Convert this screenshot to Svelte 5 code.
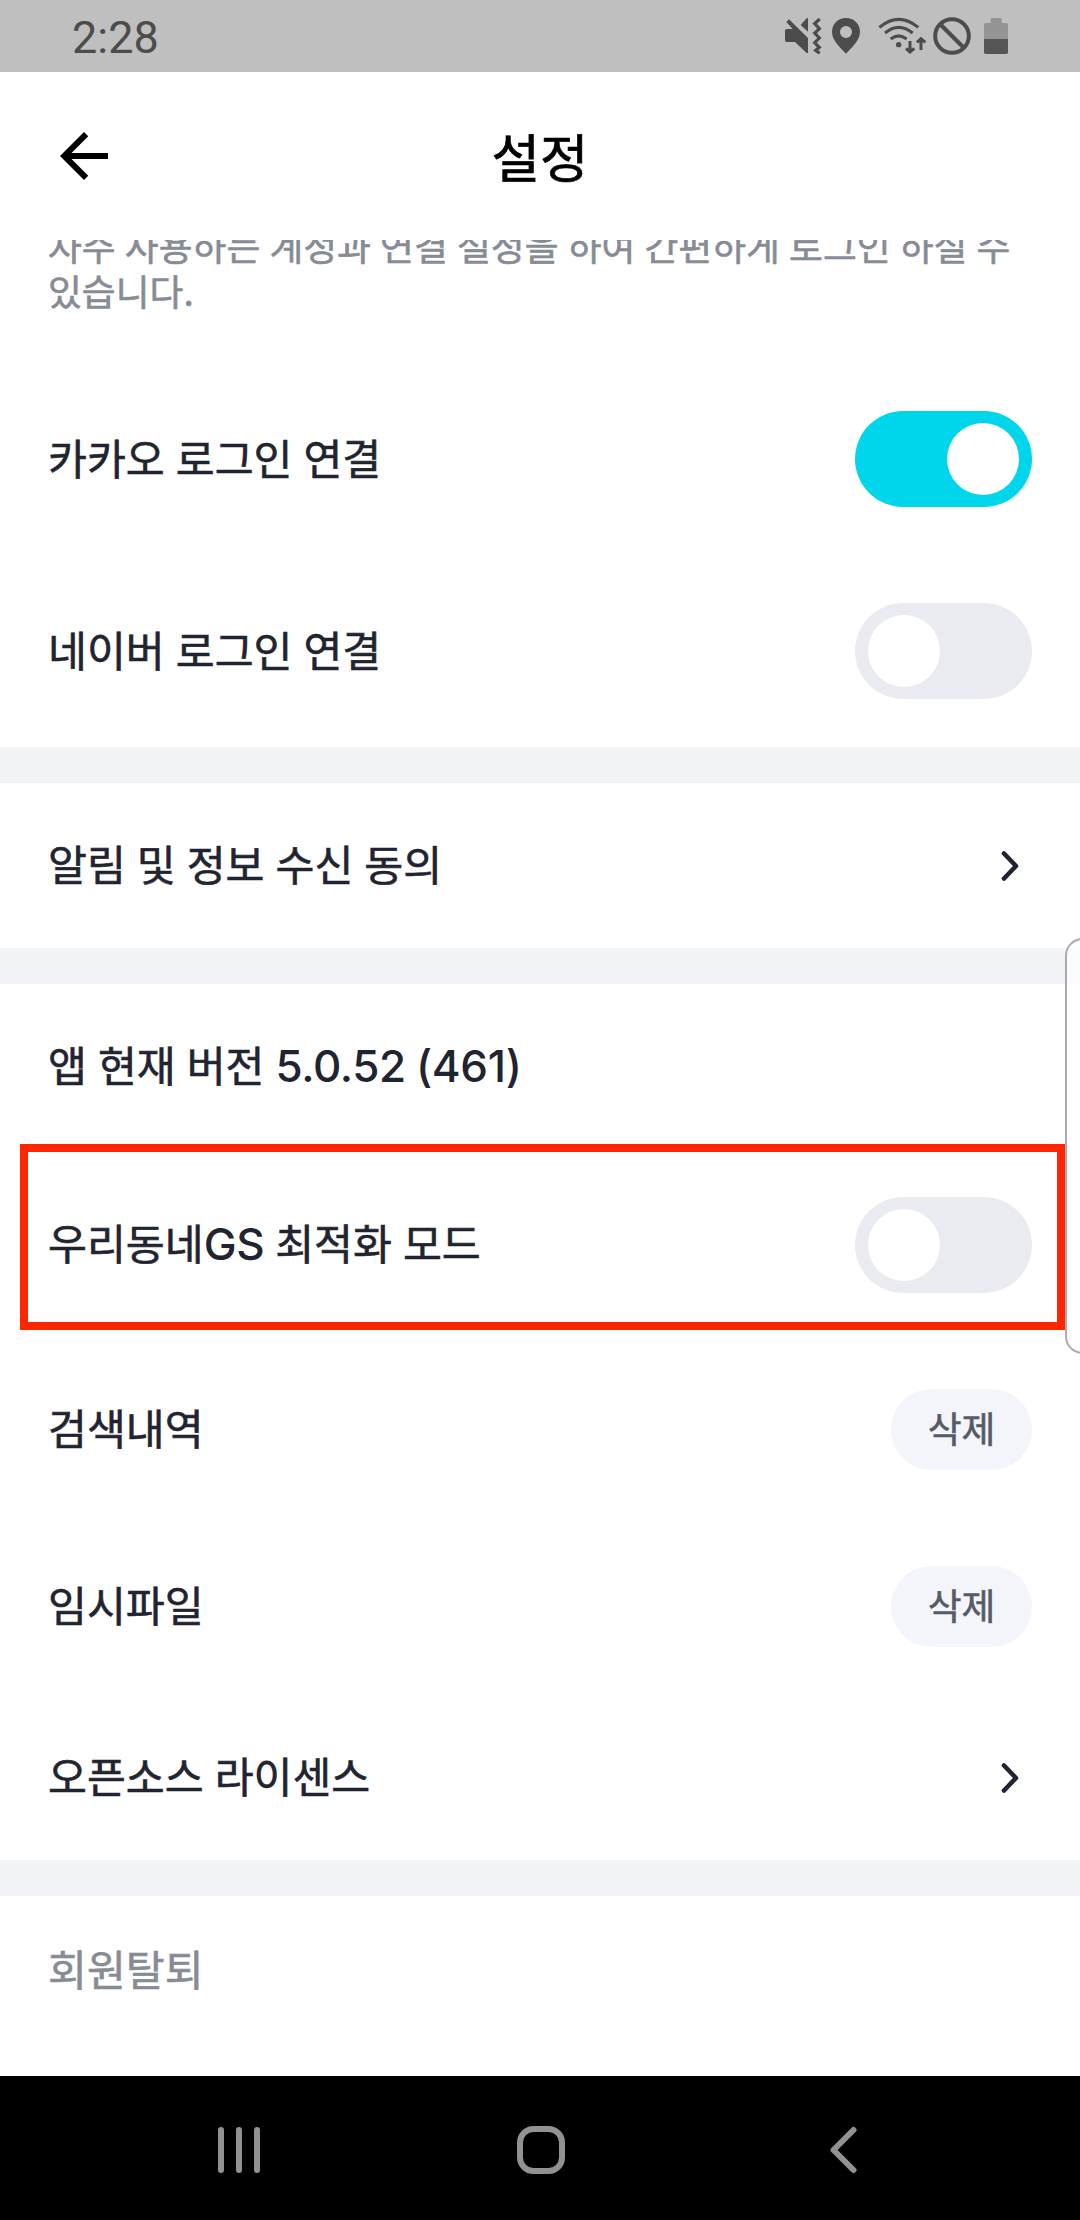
<script lang="ts">
	interface Row {
		label: string;
		latin?: string;
		tail?: string;
		kind: 'switch' | 'link' | 'button' | 'text';
		on?: boolean;
		highlight?: boolean;
	}

	const accountRows: Row[] = $state([
		{ label: '카카오 로그인 연결', kind: 'switch', on: true },
		{ label: '네이버 로그인 연결', kind: 'switch', on: false }
	]);

	const noticeRows: Row[] = [{ label: '알림 및 정보 수신 동의', kind: 'link' }];

	const appRows: Row[] = $state([
		{ label: '앱 현재 버전 ', latin: '5.0.52 (461)', kind: 'text' },
		{
			label: '우리동네',
			latin: 'GS',
			tail: ' 최적화 모드',
			kind: 'switch',
			on: false,
			highlight: true
		},
		{ label: '검색내역', kind: 'button' },
		{ label: '임시파일', kind: 'button' },
		{ label: '오픈소스 라이센스', kind: 'link' }
	]);
</script>

{#snippet settingRow(row: Row)}
	<div class="row {row.kind}" class:highlight={row.highlight}>
		<span class="label"
			>{row.label}{#if row.latin}<span class="latin">{row.latin}</span>{/if}{row.tail ?? ''}</span
		>
		{#if row.kind === 'switch'}
			<button
				class="toggle"
				class:on={row.on}
				role="switch"
				aria-checked={row.on}
				aria-label={row.label}
				onclick={() => (row.on = !row.on)}
			>
				<span class="knob"></span>
			</button>
		{:else if row.kind === 'button'}
			<button class="pill">삭제</button>
		{:else if row.kind === 'link'}
			<svg class="chevron" width="24" height="36" viewBox="0 0 24 36" aria-hidden="true">
				<path d="M5 5.5 17 18 5 30.5" />
			</svg>
		{/if}
	</div>
{/snippet}

<div class="screen">
	<div class="status">
		<span class="time">2:28</span>
		<div class="status-icons">
			<!-- 무음 / 진동 -->
			<svg class="mute" width="38" height="40" viewBox="72 48 114 120">
				<path
					d="M75 92q0-5 5-5h18L79 66l8-8 57 56v45h-4l-35-33H80q-5 0-5-5zM122 75l18-20h4v40z"
					fill="currentColor"
				/>
				<path
					d="M179 57 164 71 178 86 164 99 178 114 164 128 178 142 167 151 179 160"
					fill="none"
					stroke="currentColor"
					stroke-width="9.5"
				/>
			</svg>
			<svg class="pin" width="30" height="40" viewBox="213 48 90 120">
				<path
					d="M258 54c-24 0-42 18-42 41 0 26 24 46 42 66 18-20 42-40 42-66 0-23-18-41-42-41zm0 60a18 18 0 1 1 0-36 18 18 0 0 1 0 36z"
					fill="currentColor"
				/>
			</svg>
			<svg class="wifi" width="49" height="40" viewBox="353 48 147 120">
				<g fill="none" stroke="currentColor" stroke-width="9">
					<path d="M357 82q58-48 117 0" />
					<path d="M374 99q41-34 83 0" />
					<path d="M391 117q24-19 48 0" />
					<path d="M449 123v31M437 145l12 11 13-11M482 150v-32M470 127l12-11 13 11" />
				</g>
				<circle cx="415" cy="134" r="8" fill="currentColor" />
			</svg>
			<svg class="blocked" width="40" height="40" viewBox="516 48 120 120">
				<g fill="none" stroke="currentColor" stroke-width="12">
					<circle cx="576" cy="108" r="50.5" />
					<path d="m540 72 72 72" />
				</g>
			</svg>
			<svg class="battery" width="24" height="40" viewBox="672 48 72 120">
				<path d="M692 69V57q0-3 3-3h27q3 0 3 3v12h14q5 0 5 5v43h-72V74q0-5 5-5z" fill="#949494" />
				<path d="M672 117h72v40q0 5-5 5h-62q-5 0-5-5z" fill="#555" />
			</svg>
		</div>
	</div>

	<header>
		<button class="back" aria-label="뒤로">
			<svg width="72" height="72" viewBox="0 0 24 24">
				<path d="M20 11H7.83l5.59-5.59L12 4l-8 8 8 8 1.41-1.41L7.83 13H20v-2z" />
			</svg>
		</button>
		<h1>설정</h1>
	</header>

	<main>
		<section>
			<!-- 스크롤되어 첫 줄이 헤더 아래로 잘린 상태 -->
			<p class="desc">자주 사용하는 계정과 연결 설정을 하여 간편하게 로그인 하실 수 있습니다.</p>
			{#each accountRows as row}
				{@render settingRow(row)}
			{/each}
		</section>
		<section>
			{#each noticeRows as row}
				{@render settingRow(row)}
			{/each}
		</section>
		<section>
			{#each appRows as row}
				{@render settingRow(row)}
			{/each}
		</section>
		<section>
			<div class="row leave"><span class="label">회원탈퇴</span></div>
		</section>
	</main>

	<nav>
		<svg width="48" height="48" viewBox="0 0 48 48" aria-label="최근 앱">
			<path d="M6 4v40M24 4v40M42 4v40" />
		</svg>
		<svg width="48" height="48" viewBox="0 0 48 48" aria-label="홈">
			<rect x="3" y="3" width="42" height="42" rx="13.5" />
		</svg>
		<svg width="48" height="48" viewBox="0 0 48 48" aria-label="뒤로">
			<path d="M34.5 4 14.5 24 34.5 44" />
		</svg>
	</nav>

	<div class="edge-panel"></div>
</div>

<style>
	:global(body) {
		margin: 0;
		background: #fff;
	}

	.screen {
		position: relative;
		display: flex;
		flex-direction: column;
		width: 1080px;
		height: 2220px;
		overflow: hidden;
		background: #fff;
		color: #1f2430;
		font-family: 'Noto Sans CJK KR', 'Noto Sans', sans-serif;
		font-weight: 400;
		-webkit-text-stroke: 0.6px currentColor;
	}

	button {
		padding: 0;
		border: 0;
		background: none;
		color: inherit;
		font: inherit;
	}

	svg {
		display: block;
	}

	.status {
		display: flex;
		flex: none;
		align-items: center;
		justify-content: space-between;
		box-sizing: border-box;
		height: 72px;
		padding: 0 72px;
		background: #bfbfbf;
		color: #4c4c4c;
	}

	.time {
		padding-top: 3px;
		font: 400 45px/72px Roboto, sans-serif;
		-webkit-text-stroke: 0;
	}

	.status-icons {
		display: flex;
	}

	.pin {
		margin-left: 9px;
	}

	.wifi {
		margin-left: 17px;
	}

	.blocked {
		margin-left: 5px;
	}

	.battery {
		margin-left: 12px;
	}

	header {
		display: grid;
		flex: none;
		grid-template-columns: 72px 1fr 72px;
		align-items: center;
		height: 168px;
		padding: 0 48px;
		color: #000;
	}

	h1 {
		margin: 0;
		padding-bottom: 3px;
		font-size: 52.7px;
		font-weight: 400;
		line-height: 72px;
		text-align: center;
		-webkit-text-stroke-width: 0.7px;
	}

	main {
		flex: 1;
		min-height: 0;
		overflow: hidden;
	}

	section + section {
		border-top: 36px solid #f1f3f7;
	}

	.desc {
		height: 90px;
		margin: -17px 0 50px;
		padding: 0 48px;
		color: #868b94;
		font-size: 36.8px;
		line-height: 45px;
		word-break: keep-all;
		word-spacing: 0.9px;
	}

	.row {
		display: flex;
		align-items: center;
		justify-content: space-between;
		box-sizing: border-box;
		height: 165px;
		padding: 0 48px;
	}

	.row.switch {
		height: 192px;
	}

	.row.button {
		height: 177px;
	}

	.row.leave {
		height: 148px;
		color: #868b94;
	}

	.label {
		padding-bottom: 5px;
		font-size: 42.3px;
		line-height: 60px;
		white-space: pre;
		word-spacing: 1.5px;
	}

	.text .label {
		padding-bottom: 3px;
	}

	.latin {
		font-family: Inter, sans-serif;
		font-size: 44px;
		font-weight: 500;
		letter-spacing: -0.4px;
		word-spacing: -1px;
		-webkit-text-stroke: 0;
	}

	.highlight {
		position: relative;
	}

	.highlight::after {
		content: '';
		position: absolute;
		inset: -5px 15px 11px 20px;
		border: 8px solid #ff2600;
		pointer-events: none;
	}

	.toggle {
		display: flex;
		align-items: center;
		box-sizing: border-box;
		width: 177px;
		height: 96px;
		padding: 0 13px;
		border-radius: 48px;
		background: #eaebf1;
	}

	.toggle.on {
		justify-content: flex-end;
		background: #00d6eb;
	}

	.knob {
		width: 72px;
		height: 72px;
		border-radius: 50%;
		background: #fff;
	}

	.pill {
		width: 141px;
		height: 81px;
		padding-bottom: 5px;
		border-radius: 41px;
		background: #f3f5fb;
		color: #555c67;
		font-size: 36.8px;
		line-height: 76px;
	}

	.chevron {
		margin-right: 9px;
		fill: none;
		stroke: #1f2430;
		stroke-width: 4.6;
		stroke-linecap: round;
		stroke-linejoin: round;
	}

	nav {
		display: flex;
		flex: none;
		align-items: center;
		justify-content: center;
		gap: 254px;
		box-sizing: border-box;
		height: 144px;
		padding: 4px 0 0 2px;
		background: #000;
	}

	nav svg {
		fill: none;
		stroke: #929292;
		stroke-width: 6;
		stroke-linecap: round;
		stroke-linejoin: round;
	}

	/* 화면 오른쪽 가장자리의 엣지 패널 핸들 */
	.edge-panel {
		position: absolute;
		top: 938px;
		right: -20px;
		box-sizing: border-box;
		width: 35px;
		height: 416px;
		border: 2px solid #acacac;
		border-radius: 20px;
		background: rgba(255, 255, 255, 0.7);
	}
</style>
